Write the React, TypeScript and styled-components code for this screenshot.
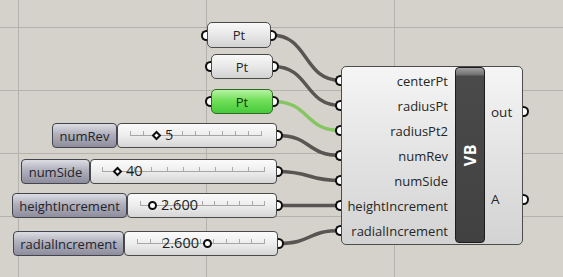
import styled, { createGlobalStyle, css } from "styled-components";

const GlobalStyle = createGlobalStyle`
  html, body {
    margin: 0;
    padding: 0;
    background: #d5d1cb;
  }
  body {
    font-family: "Open Sans", "Noto Sans", sans-serif;
  }
`;

const Canvas = styled.div`
  position: relative;
  width: 563px;
  height: 277px;
  overflow: hidden;
  background-color: #d5d1cb;
  background-image: linear-gradient(to right, #b5b2ad 1px, transparent 1px),
    linear-gradient(to bottom, #b5b2ad 1px, transparent 1px);
  background-size: 188px 63px;
  background-position: 18px 27px;
`;

const Wires = styled.svg`
  position: absolute;
  inset: 0;
  z-index: 0;
`;

const Wire = styled.path<{ $active?: boolean }>`
  fill: none;
  stroke: ${(p) => (p.$active ? "#85c662" : "#585552")};
  stroke-width: 3.5;
  stroke-linecap: round;
`;

const Place = styled.div<{ $x: number; $y: number }>`
  position: absolute;
  left: ${(p) => p.$x}px;
  top: ${(p) => p.$y}px;
  z-index: 1;
`;

const Port = styled.span<{ $side: "in" | "out" }>`
  position: absolute;
  top: 50%;
  width: 6px;
  height: 11px;
  margin-top: -5.5px;
  box-sizing: border-box;
  background: #fff;
  border: 2.5px solid #0e0e0e;
  ${(p) =>
    p.$side === "in"
      ? css`
          left: -7px;
          border-right: none;
          border-radius: 6px 0 0 6px;
        `
      : css`
          right: -7px;
          border-left: none;
          border-radius: 0 6px 6px 0;
        `}
`;

const ParamBox = styled.div<{ $w: number; $h: number; $active?: boolean }>`
  position: relative;
  display: flex;
  align-items: center;
  justify-content: center;
  width: ${(p) => p.$w}px;
  height: ${(p) => p.$h}px;
  box-sizing: border-box;
  border: 1px solid #4a4a4a;
  border-radius: 5px;
  background: linear-gradient(#f8f8f8, #e8e8e8 50%, #d2d2d2);
  font-size: 13px;
  color: #262626;
  ${(p) =>
    p.$active &&
    css`
      border-color: #2f6b27;
      background: linear-gradient(#b6f3a3, #72df5a 45%, #47c93b);
      color: #163812;
    `}
`;

const SliderRow = styled.div`
  display: flex;
  height: 25px;
`;

const SliderLabel = styled.div<{ $w: number }>`
  display: flex;
  align-items: center;
  justify-content: center;
  width: ${(p) => p.$w}px;
  box-sizing: border-box;
  border: 1px solid #44444e;
  border-radius: 4px;
  background: linear-gradient(#dcdce3, #b0b0bd 45%, #8d8d9d);
  font-size: 13px;
  color: #24242c;
`;

const SliderBody = styled.div<{ $w: number; $l: number; $r: number }>`
  position: relative;
  display: flex;
  align-items: flex-start;
  width: ${(p) => p.$w}px;
  box-sizing: border-box;
  padding: 0 ${(p) => p.$r}px 0 ${(p) => p.$l - 1}px;
  border: 1px solid #4a4a4a;
  border-radius: 4px;
  background: linear-gradient(#fbfbfb, #ededed 50%, #d6d6d6);
`;

const Track = styled.div`
  flex: 1;
  display: flex;
  justify-content: space-between;
  align-items: flex-end;
  height: 5px;
  margin-top: 6px;
  border-bottom: 1px solid #a6a6a6;
`;

const Tick = styled.span`
  width: 1px;
  height: 4px;
  background: #a9a9a9;
`;

const Grip = styled.div`
  position: absolute;
  top: 0;
  bottom: 0;
  display: flex;
  align-items: center;
  gap: 4px;
`;

const Marker = styled.span<{ $shape: "diamond" | "circle" }>`
  display: block;
  box-sizing: border-box;
  background: #fff;
  ${(p) =>
    p.$shape === "diamond"
      ? css`
          width: 7px;
          height: 7px;
          margin: 0 1px;
          border: 2px solid #0e0e0e;
          transform: rotate(45deg);
        `
      : css`
          width: 9px;
          height: 9px;
          border: 2.5px solid #0e0e0e;
          border-radius: 50%;
        `}
`;

const Value = styled.span`
  font-size: 14.5px;
  color: #1e1e1e;
  line-height: 1;
`;

const Component = styled.div`
  display: flex;
  width: 182px;
  height: 179px;
  box-sizing: border-box;
  border: 1px solid #4d4d4d;
  border-radius: 5px;
  background: linear-gradient(#f5f5f5, #e3e3e3 50%, #d3d3d3);
`;

const Column = styled.div<{ $w?: number }>`
  display: flex;
  flex-direction: column;
  ${(p) => (p.$w ? `width: ${p.$w}px;` : "flex: 1;")}
  padding: 1px 0;
`;

const InputRow = styled.div`
  position: relative;
  flex: 1;
  display: flex;
  align-items: center;
  justify-content: flex-end;
  padding-right: 7px;
  font-size: 13px;
  color: #262626;
`;

const OutputRow = styled.div`
  position: relative;
  flex: 1;
  display: flex;
  align-items: center;
  padding-left: 6px;
  font-size: 13.5px;
  color: #262626;
`;

const Bar = styled.div`
  display: flex;
  align-items: center;
  justify-content: center;
  width: 30px;
  margin: 0 0 1px;
  box-sizing: border-box;
  border: 1px solid #1c1c1c;
  border-radius: 4px;
  background: linear-gradient(#a2a2a2 0, #6f6f6f 7px, #4a4a4a 8px, #414141 100%);
`;

const BarText = styled.span`
  writing-mode: vertical-rl;
  transform: rotate(180deg);
  font-size: 16px;
  font-weight: 700;
  color: #fff;
  letter-spacing: 0.5px;
`;

type Param = { x: number; y: number; w: number; h: number; active?: boolean };

const params: Param[] = [
  { x: 207, y: 22, w: 64, h: 26 },
  { x: 211, y: 54, w: 62, h: 25 },
  { x: 211, y: 89, w: 62, h: 25, active: true },
];

type Slider = {
  name: string;
  x: number;
  y: number;
  labelW: number;
  bodyW: number;
  l: number;
  r: number;
  ticks: number;
  value: string;
  marker: "diamond" | "circle";
  grip: number;
  after?: boolean;
};

const sliders: Slider[] = [
  { name: "numRev", x: 52, y: 123, labelW: 65, bodyW: 160, l: 13, r: 14, ticks: 11, value: "5", marker: "diamond", grip: 34 },
  { name: "numSide", x: 21, y: 159, labelW: 69, bodyW: 187, l: 12, r: 11, ticks: 11, value: "40", marker: "diamond", grip: 22 },
  { name: "heightIncrement", x: 12, y: 193, labelW: 115, bodyW: 150, l: 13, r: 11, ticks: 11, value: "2.600", marker: "circle", grip: 20 },
  { name: "radialIncrement", x: 13, y: 231, labelW: 111, bodyW: 154, l: 13, r: 12, ticks: 11, value: "2.600", marker: "circle", grip: 37, after: true },
];

const inputs = ["centerPt", "radiusPt", "radiusPt2", "numRev", "numSide", "heightIncrement", "radialIncrement"];
const outputs = ["out", "A"];

const comp = { x: 341, y: 66 };

const wire = (x1: number, y1: number, x2: number, y2: number) => {
  const d = (x2 - x1) * 0.55;
  return `M${x1} ${y1} C${x1 + d} ${y1}, ${x2 - d} ${y2}, ${x2} ${y2}`;
};

const sources = [
  ...params.map((p) => ({ x: p.x + p.w, y: p.y + p.h / 2, active: p.active })),
  ...sliders.map((s) => ({ x: s.x + s.labelW + s.bodyW, y: s.y + 12.5, active: false })),
];

export default function App() {
  return (
    <>
      <GlobalStyle />
      <Canvas>
        <Wires width={563} height={277}>
          {sources.map((s, i) => (
            <Wire
              key={i}
              $active={s.active}
              d={wire(s.x, s.y, comp.x, comp.y + 2 + 25 * i + 12.5)}
            />
          ))}
        </Wires>

        {params.map((p, i) => (
          <Place key={i} $x={p.x} $y={p.y}>
            <ParamBox $w={p.w} $h={p.h} $active={p.active}>
              <Port $side="in" />
              Pt
              <Port $side="out" />
            </ParamBox>
          </Place>
        ))}

        {sliders.map((s) => (
          <Place key={s.name} $x={s.x} $y={s.y}>
            <SliderRow>
              <SliderLabel $w={s.labelW}>{s.name}</SliderLabel>
              <SliderBody $w={s.bodyW} $l={s.l} $r={s.r}>
                <Track>
                  {Array.from({ length: s.ticks }, (_, i) => (
                    <Tick key={i} />
                  ))}
                </Track>
                <Grip style={{ left: s.grip }}>
                  {s.after ? (
                    <>
                      <Value>{s.value}</Value>
                      <Marker $shape={s.marker} />
                    </>
                  ) : (
                    <>
                      <Marker $shape={s.marker} />
                      <Value>{s.value}</Value>
                    </>
                  )}
                </Grip>
                <Port $side="out" />
              </SliderBody>
            </SliderRow>
          </Place>
        ))}

        <Place $x={comp.x} $y={comp.y}>
          <Component>
            <Column $w={113}>
              {inputs.map((name) => (
                <InputRow key={name}>
                  <Port $side="in" />
                  {name}
                </InputRow>
              ))}
            </Column>
            <Bar>
              <BarText>VB</BarText>
            </Bar>
            <Column>
              {outputs.map((name) => (
                <OutputRow key={name}>
                  {name}
                  <Port $side="out" />
                </OutputRow>
              ))}
            </Column>
          </Component>
        </Place>
      </Canvas>
    </>
  );
}
